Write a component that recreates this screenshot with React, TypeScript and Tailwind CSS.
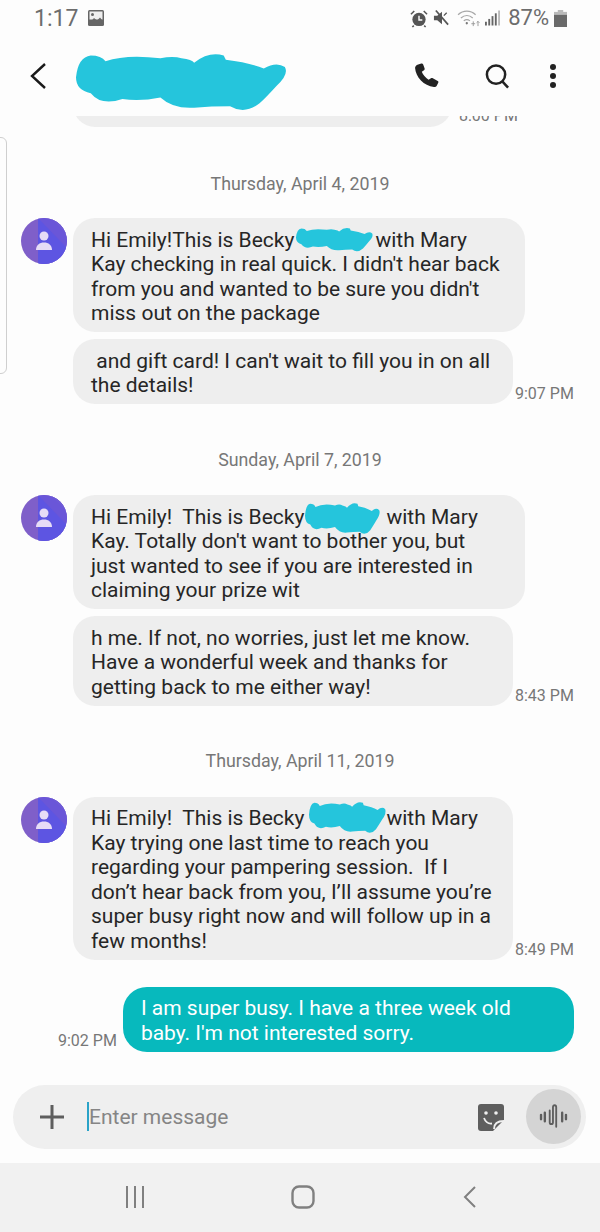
import React from "react";

const BLOB =
  "M0 16Q1 2 7 1Q12 1 14 5Q24 0 40 3Q46 1 50 3Q55 4 56 6Q63 -2 70 1L71 4Q82 6 89 10Q95 5 99 9Q101 14 95 22Q90 30 87 34Q80 42 73 36Q64 36 56 37Q46 38 40 30Q30 33 22 31Q12 36 7 27Q0 25 0 16Z";

const Blob = ({ className }: { className: string }) => (
  <svg className={`overflow-visible ${className}`} viewBox="0 0 100 40" preserveAspectRatio="none">
    <path d={BLOB} fill="#25c5dc" />
  </svg>
);

const Gap = ({ className }: { className: string }) => <span className={`inline-block ${className}`} />;

const Bubble = ({ w, lines, children }: { w: string; lines: React.ReactNode[]; children?: React.ReactNode }) => (
  <div className={`relative ${w} rounded-[22px] bg-[#eeeeee] pl-[18px] pt-[9.5px] pb-[6.5px] text-[21px] leading-[24.5px] text-[#262626] whitespace-pre`}>
    {lines.map((l, i) => (
      <div key={i}>{l}</div>
    ))}
    {children}
  </div>
);

const Time = ({ children, className = "" }: { children: React.ReactNode; className?: string }) => (
  <span className={`text-[16px] leading-[18px] text-[#777777] whitespace-nowrap ${className}`}>{children}</span>
);

const DateLabel = ({ children, className }: { children: React.ReactNode; className: string }) => (
  <div className={`text-center text-[17.8px] leading-[20px] text-[#777777] ${className}`}>{children}</div>
);

const Avatar = () => (
  <svg width="46" height="46" viewBox="0 0 46 46" className="shrink-0">
    <defs>
      <clipPath id="av">
        <circle cx="23" cy="23" r="23" />
      </clipPath>
    </defs>
    <g clipPath="url(#av)">
      <rect width="46" height="46" fill="#7f5fc9" />
      <rect x="17" width="29" height="46" fill="#6a56d8" />
      <path d="M17 0L46 30V46H17Z" fill="#5d55e2" />
      <path d="M30 0L46 16V0Z" fill="#6f5bd6" />
    </g>
    <circle cx="23" cy="18" r="4.5" fill="#e6dcf6" />
    <path d="M15 32c0-5 3.5-7.5 8-7.5s8 2.5 8 7.5z" fill="#e6dcf6" />
  </svg>
);

const Row = ({ children, time, className = "" }: { children: React.ReactNode; time?: string; className?: string }) => (
  <div className={`flex items-end ml-[73px] ${className}`}>
    {children}
    {time && <Time className="ml-[2px] mb-[1px]">{time}</Time>}
  </div>
);

export default function App() {
  return (
    <div
      className="relative w-[600px] h-[1232px] overflow-hidden flex flex-col bg-[#fdfdfd]"
      style={{ fontFamily: 'Roboto, "Liberation Sans", sans-serif' }}
    >
      {/* status bar */}
      <div className="h-[36px] shrink-0 flex items-center pl-[34px] pr-[33px] text-[#6d6d6d]">
        <span className="text-[23px] leading-none">1:17</span>
        <svg width="16" height="16" viewBox="0 0 16 16" className="ml-[10px]">
          <rect width="16" height="16" rx="1.5" fill="#666" />
          <rect x="1.5" y="1.5" width="13" height="8" fill="#eee" />
          <circle cx="4.5" cy="4.5" r="1.5" fill="#666" />
          <path d="M1.5 13l4.5-5 3 2.5 3-3 2.5 3v3h-13z" fill="#666" />
        </svg>
        <div className="ml-auto flex items-center">
          <svg width="18" height="19" viewBox="0 0 19 19">
            <circle cx="9.5" cy="10.5" r="7" fill="#555" />
            <path d="M9.5 6.5v4.5h3.5" stroke="#fff" strokeWidth="1.5" fill="none" />
            <path d="M1 5l3.5-3.5M18 5l-3.5-3.5M4 17l-1.5 1.5M15 17l1.5 1.5" stroke="#555" strokeWidth="1.6" />
          </svg>
          <svg width="17" height="18" viewBox="0 0 18 18" className="ml-[5px]">
            <path d="M1 6.5h3.5L9.5 2.5v13L4.5 11.500H1z" fill="#555" />
            <path d="M3 1l13 15" stroke="#555" strokeWidth="1.8" />
            <path d="M11.500 6.500l3-3" stroke="#555" strokeWidth="1.400" />
          </svg>
          <svg width="23" height="19" viewBox="0 0 24 20" fill="none" className="ml-[7px]" stroke="#a8a8a8" strokeWidth="1.3">
            <path d="M1 6c5.500-5 13-5 18.500 0" />
            <path d="M4 9.500c3.800-3.300 8.800-3.300 12.500 0" />
            <path d="M7 12.500c2-1.700 4.500-1.700 6.500 0" />
            <circle cx="10.200" cy="15" r="1.200" fill="#777" stroke="none" />
            <path d="M17 13v5M15 15.500h4M22 18v-5M20.500 14.500l1.500-1.500 1.500 1.500" stroke="#999" strokeWidth="1" />
          </svg>
          <svg width="15" height="16" viewBox="0 0 16 16" className="ml-[5px]">
            <rect x="0" y="12" width="2" height="4" fill="#666" />
            <rect x="3.500" y="9" width="2" height="7" fill="#666" />
            <rect x="7" y="6" width="2" height="10" fill="#666" />
            <rect x="10.500" y="3" width="2" height="13" fill="#666" />
            <rect x="14" y="0" width="2" height="16" fill="#bbb" />
          </svg>
          <span className="ml-[8px] text-[22px] leading-none">87%</span>
          <svg width="13" height="17" viewBox="0 0 12 18" className="ml-[5px]" preserveAspectRatio="none">
            <rect x="3.500" y="0" width="5" height="3" fill="#bbb" />
            <rect x="0" y="2" width="12" height="3" fill="#bbb" />
            <rect x="0" y="5" width="12" height="13" fill="#6a6a6a" />
          </svg>
        </div>
      </div>

      {/* toolbar */}
      <div className="relative h-[80px] shrink-0 flex items-center pl-[28px] pr-[43px]">
        <svg width="20" height="28" viewBox="0 0 20 28" fill="none">
          <path d="M17 2L4 14l13 12" stroke="#1a1a1a" strokeWidth="2.400" />
        </svg>
        <Blob className="absolute left-[76px] top-[18px] w-[211px] h-[58px]" />
        <svg width="27" height="26" viewBox="0 0 26 28" className="ml-auto" preserveAspectRatio="none">
          <path
            d="M5 1.500l3-1c.9-.2 1.500.2 1.800 1l1.400 4.500c.2.700 0 1.300-.6 1.800L8.500 9.500c1 3 3.500 6.500 6.500 8.500l2.300-1.500c.6-.4 1.200-.4 1.800 0l4.700 3c.7.500.8 1.100.5 1.800l-1.300 2.800c-.5 1-1.500 1.700-2.800 1.700C10.500 25 2.500 15 2 5.500 2 3.500 3 2.200 5 1.500z"
            fill="#222"
          />
        </svg>
        <svg width="26" height="26" viewBox="0 0 26 27" fill="none" className="ml-[44px]">
          <circle cx="12" cy="12" r="9.500" stroke="#222" strokeWidth="2.600" />
          <path d="M18.500 19l6 6.500" stroke="#222" strokeWidth="2.600" />
        </svg>
        <svg width="8" height="26" viewBox="0 0 8 26" className="ml-[39px]">
          <circle cx="4" cy="4" r="3" fill="#222" />
          <circle cx="4" cy="13" r="3" fill="#222" />
          <circle cx="4" cy="22" r="3" fill="#222" />
        </svg>
      </div>

      {/* conversation */}
      <div className="flex-1 min-h-0 flex flex-col">
        <div className="flex ml-[73px] h-[11px] overflow-hidden items-end">
          <div className="w-[379px] h-[44px] shrink-0 rounded-[22px] bg-[#eeeeee]" />
          <Time className="ml-[7px] mb-[2px]">8:00 PM</Time>
        </div>

        <DateLabel className="mt-[47px]">Thursday, April 4, 2019</DateLabel>
        <div className="relative mt-[24px]">
          <div className="absolute left-[21px] top-0">
            <Avatar />
          </div>
          <Row>
            <Bubble
              w="w-[452px]"
              lines={[
                <>Hi Emily!This is Becky<Gap className="w-[81px]" />with Mary</>,
                "Kay checking in real quick. I didn't hear back",
                "from you and wanted to be sure you didn't",
                "miss out on the package",
              ]}
            >
              <Blob className="absolute left-[223px] top-[10px] w-[77px] h-[24px]" />
            </Bubble>
          </Row>
          <Row time="9:07 PM" className="mt-[7px]">
            <Bubble w="w-[440px]" lines={[" and gift card! I can't wait to fill you in on all", "the details!"]} />
          </Row>
        </div>

        <DateLabel className="mt-[46px]">Sunday, April 7, 2019</DateLabel>
        <div className="relative mt-[25px]">
          <div className="absolute left-[21px] top-0">
            <Avatar />
          </div>
          <Row>
            <Bubble
              w="w-[452px]"
              lines={[
                <>Hi Emily!  This is Becky<Gap className="w-[82px]" />with Mary</>,
                "Kay. Totally don't want to bother you, but",
                "just wanted to see if you are interested in",
                "claiming your prize wit",
              ]}
            >
              <Blob className="absolute left-[232px] top-[8px] w-[75px] h-[32px]" />
            </Bubble>
          </Row>
          <Row time="8:43 PM" className="mt-[7px]">
            <Bubble
              w="w-[440px]"
              lines={[
                "h me. If not, no worries, just let me know.",
                "Have a wonderful week and thanks for",
                "getting back to me either way!",
              ]}
            />
          </Row>
        </div>

        <DateLabel className="mt-[45px]">Thursday, April 11, 2019</DateLabel>
        <div className="relative mt-[26px]">
          <div className="absolute left-[21px] top-0">
            <Avatar />
          </div>
          <Row time="8:49 PM">
            <Bubble
              w="w-[440px]"
              lines={[
                <>Hi Emily!  This is Becky<Gap className="w-[82px]" />with Mary</>,
                "Kay trying one last time to reach you",
                "regarding your pampering session.  If I",
                "don\u2019t hear back from you, I\u2019ll assume you\u2019re",
                "super busy right now and will follow up in a",
                "few months!",
              ]}
            >
              <Blob className="absolute left-[236px] top-[5px] w-[77px] h-[32px]" />
            </Bubble>
          </Row>
        </div>

        <div className="flex items-end mt-[27px] ml-[58px]">
          <Time className="mb-[2px] mr-[6px]">9:02 PM</Time>
          <div className="w-[451px] rounded-[24px] bg-[#07b9bd] pl-[18px] pt-[9.5px] pb-[6.5px] text-[21px] leading-[24.5px] text-white whitespace-pre">
            <div>I am super busy. I have a three week old</div>
            <div>baby. I'm not interested sorry.</div>
          </div>
        </div>

        {/* composer */}
        <div className="mt-[33px] ml-[13px] w-[573px] h-[64px] rounded-[32px] bg-[#efefef] flex items-center pl-[26px] pr-[5px]">
          <svg width="26" height="26" viewBox="0 0 26 26">
            <path d="M13 1v24M1 13h24" stroke="#5e5e5e" strokeWidth="3" />
          </svg>
          <span className="ml-[22px] w-[2px] h-[29px] bg-[#2aa3c8]" />
          <span className="pt-[2px] text-[21px] leading-none text-[#858585]">Enter message</span>
          <svg width="28" height="28" viewBox="0 0 28 28" className="ml-auto mr-[21px]">
            <path d="M4 1h20a3 3 0 0 1 3 3v13L16 28H4a3 3 0 0 1-3-3V4a3 3 0 0 1 3-3z" fill="#5e5e5e" />
            <circle cx="9" cy="10" r="1.800" fill="#efefef" />
            <circle cx="19" cy="10" r="1.800" fill="#efefef" />
            <path d="M7 15c1.500 4 4 6 8 5.500" stroke="#efefef" strokeWidth="1.800" fill="none" />
            <path d="M17 26c0-5 3-8 10-8" stroke="#efefef" strokeWidth="1.800" fill="none" />
          </svg>
          <div className="w-[55px] h-[55px] rounded-full bg-[#d4d4d4] flex items-center justify-center">
            <svg width="29" height="26" viewBox="0 0 26 24" fill="none" stroke="#5e5e5e" strokeLinecap="round">
              <path d="M1.500 10v4M5 8v8M21 8v8M24.500 10v4" strokeWidth="2.200" />
              <path d="M9.500 6v11c0 2 3 2 3 0V3c0-2.500 3-2.500 3 0v18" strokeWidth="1.700" />
            </svg>
          </div>
        </div>

        {/* navigation */}
        <div className="mt-[14px] flex-1 bg-[#f1f1f1] flex items-center">
          <svg width="20" height="22" viewBox="0 0 20 22" className="ml-[125px]">
            <path d="M2 0v22M10 0v22M18 0v22" stroke="#808080" strokeWidth="2" />
          </svg>
          <svg width="24" height="24" viewBox="0 0 24 24" fill="none" className="ml-[146px]">
            <rect x="1.500" y="1.500" width="21" height="21" rx="6.500" stroke="#808080" strokeWidth="2.400" />
          </svg>
          <svg width="14" height="22" viewBox="0 0 14 22" fill="none" className="ml-[148px]">
            <path d="M12 1L2 11l10 10" stroke="#808080" strokeWidth="2" />
          </svg>
        </div>
      </div>

      {/* edge panel handle */}
      <div className="absolute -left-[3px] top-[137px] w-[10px] h-[237px] rounded-r-[6px] border border-[#cfcfcf] bg-[#fdfdfd]" />
    </div>
  );
}
